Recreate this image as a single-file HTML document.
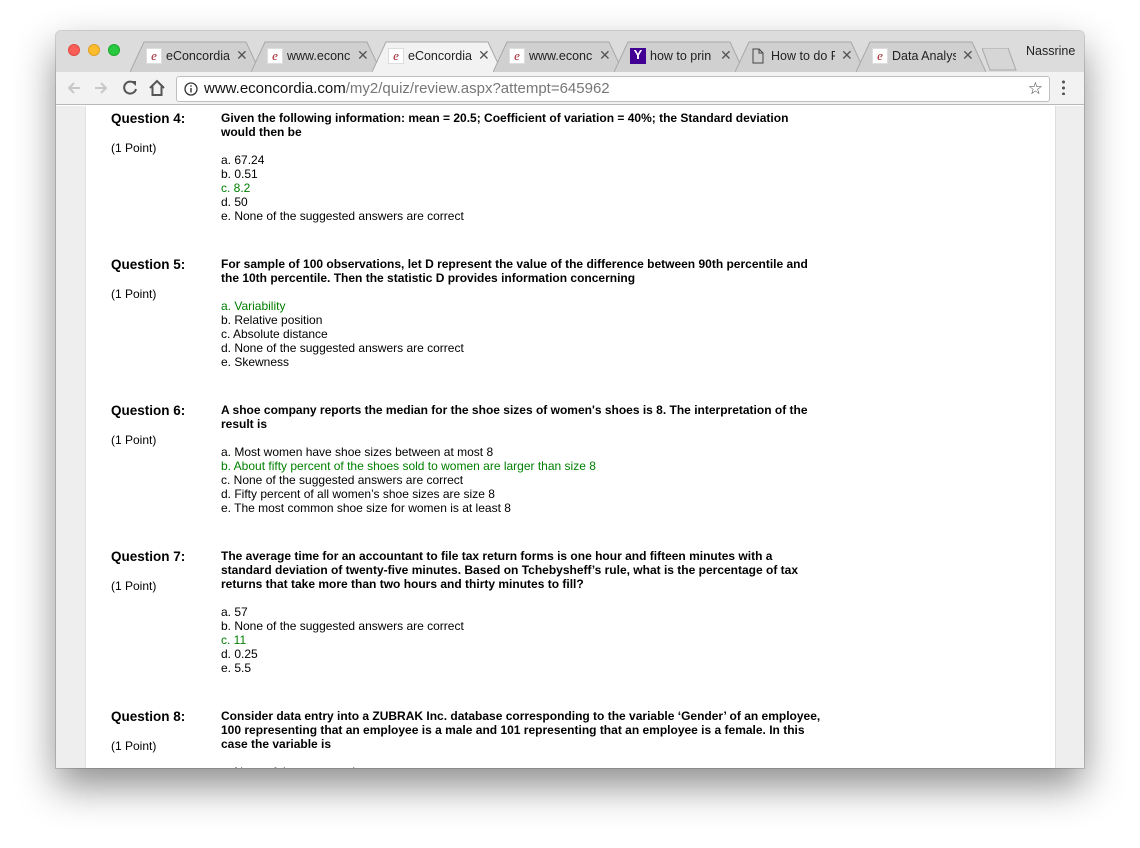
<!DOCTYPE html>
<html><head><style>
*{margin:0;padding:0;box-sizing:border-box}
body{width:1140px;height:848px;background:#fff;position:relative;overflow:hidden;font-family:"Liberation Sans",Arial,sans-serif}
.win{position:absolute;left:56px;top:31px;width:1028px;height:737px;border-radius:5px 5px 0 0;overflow:hidden;box-shadow:0 18px 40px rgba(0,0,0,.45),0 0 0 1px rgba(0,0,0,.15);background:#fff}
.tabbar{position:absolute;left:0;top:0;width:1028px;height:41px;background:#dcdcdc}
.toolbar{position:absolute;left:0;top:41px;width:1028px;height:33px;background:#f2f2f2;border-bottom:1px solid #b8b8b8}
.dot{position:absolute;top:13px;width:12px;height:12px;border-radius:50%}
.tab{position:absolute;top:10px;height:31px;font-size:12.5px;color:#222}
.tab svg{position:absolute;left:0;top:0}
.tab .t{position:absolute;top:8px;left:36px;white-space:nowrap;overflow:hidden}
.tab .x{position:absolute;top:6px;font-size:14px;color:#555}
.fav{position:absolute;left:16px;top:7px;width:16px;height:16px;background:#fff;border:1px solid #ddd;color:#a0202a;font-size:13px;line-height:13px;text-align:center;font-style:italic;font-family:"Liberation Serif",serif}
.url{position:absolute;left:120px;top:4px;width:874px;height:26px;background:#fff;border:1px solid #c0c0c0;border-radius:3px;font-size:15px;line-height:24px;padding-left:27px;color:#111}
.url span{color:#777}
.left{position:absolute;left:0;top:75px;width:30px;height:662px;background:#eeeeee;border-right:1px solid #e2e2e2}
.right{position:absolute;left:999px;top:75px;width:29px;height:662px;background:#eeeeee;border-left:1px solid #ddd}
.q{position:absolute;left:55px;font-size:12px;color:#000}
.q .h{position:absolute;left:0;top:0;font-weight:bold;font-size:13.5px;line-height:16px;white-space:nowrap}
.q .p{position:absolute;left:0;top:30px;font-size:12px;white-space:nowrap}
.q .b{position:absolute;left:110px;top:0;width:603px;font-weight:bold;line-height:14px}
.q .a{position:absolute;left:110px;line-height:14px;white-space:nowrap}
.g{color:#008000}
</style></head><body>
<div class="win">
 <div class="tabbar">
  <div class="dot" style="left:12px;background:#fc5f57;border:1px solid #de4a42"></div>
  <div class="dot" style="left:32px;background:#fdbc2e;border:1px solid #dea123"></div>
  <div class="dot" style="left:52px;background:#28c840;border:1px solid #1aab2a"></div>

  <div class="tab" style="left:74px;width:130px"><svg width="130" height="31"><path d="M0 31 L14 1 H116 L130 31" fill="#d0d0d0" stroke="#a8a8a8"/></svg><div class="fav">e</div><div class="t" style="width:66px">eConcordia</div><div class="x" style="left:106px">✕</div></div>
  <div class="tab" style="left:195px;width:130px"><svg width="130" height="31"><path d="M0 31 L14 1 H116 L130 31" fill="#d0d0d0" stroke="#a8a8a8"/></svg><div class="fav">e</div><div class="t" style="width:64px">www.econc</div><div class="x" style="left:106px">✕</div></div>
  <div class="tab" style="left:316px;width:130px"><svg width="130" height="31"><path d="M0 31 L14 1 H116 L130 31" fill="#f2f2f2" stroke="#a8a8a8"/></svg><div class="fav">e</div><div class="t" style="width:70px">eConcordia</div><div class="x" style="left:106px">✕</div></div>
  <div class="tab" style="left:437px;width:130px"><svg width="130" height="31"><path d="M0 31 L14 1 H116 L130 31" fill="#d0d0d0" stroke="#a8a8a8"/></svg><div class="fav">e</div><div class="t" style="width:64px">www.econc</div><div class="x" style="left:106px">✕</div></div>
  <div class="tab" style="left:558px;width:130px"><svg width="130" height="31"><path d="M0 31 L14 1 H116 L130 31" fill="#d0d0d0" stroke="#a8a8a8"/></svg><div class="fav" style="background:#410093;color:#fff;border:none;font-style:normal;font-family:'Liberation Sans';font-weight:bold">Y</div><div class="t" style="width:64px">how to prin</div><div class="x" style="left:106px">✕</div></div>
  <div class="tab" style="left:679px;width:130px"><svg width="130" height="31"><path d="M0 31 L14 1 H116 L130 31" fill="#d0d0d0" stroke="#a8a8a8"/><path d="M18 8 H24 L28 12 V22 H18 Z M24 8 V12 H28" fill="none" stroke="#444"/></svg><div class="t" style="width:64px">How to do F</div><div class="x" style="left:106px">✕</div></div>
  <div class="tab" style="left:800px;width:130px"><svg width="130" height="31"><path d="M0 31 L14 1 H116 L130 31" fill="#d0d0d0" stroke="#a8a8a8"/></svg><div class="fav">e</div><div class="t" style="width:64px">Data Analys</div><div class="x" style="left:106px">✕</div></div>
  <svg style="position:absolute;left:926px;top:17px" width="36" height="24"><path d="M0 0 H26 L34 22 H8 Z" fill="#d6d6d6" stroke="#a8a8a8"/></svg>
  <div style="position:absolute;left:970px;top:13px;font-size:12.5px;color:#222">Nassrine</div>
 </div>
 <div class="toolbar">
  <svg style="position:absolute;left:10px;top:8px" width="16" height="16"><path d="M14 8 H3 M8 3 L3 8 L8 13" fill="none" stroke="#c8c8c8" stroke-width="2"/></svg>
  <svg style="position:absolute;left:37px;top:8px" width="16" height="16"><path d="M2 8 H13 M8 3 L13 8 L8 13" fill="none" stroke="#c8c8c8" stroke-width="2"/></svg>
  <svg style="position:absolute;left:65px;top:7px" width="18" height="18"><path d="M14 5 A6 6 0 1 0 15 10" fill="none" stroke="#555" stroke-width="2"/><path d="M10 2 H15 V7 Z" fill="#555"/></svg>
  <svg style="position:absolute;left:92px;top:7px" width="18" height="18"><path d="M2 9 L9 2 L16 9 M4.5 7.5 V16 H13.5 V7.5" fill="none" stroke="#555" stroke-width="2"/></svg>
  <div class="url"><svg style="position:absolute;left:7px;top:5px" width="14" height="14"><circle cx="7" cy="7" r="6" fill="none" stroke="#333" stroke-width="1.3"/><rect x="6.3" y="6" width="1.4" height="4.5" fill="#333"/><rect x="6.3" y="3.3" width="1.4" height="1.4" fill="#333"/></svg>www.econcordia.com<span>/my2/quiz/review.aspx?attempt=645962</span><div style="position:absolute;right:6px;top:0;font-size:17px;color:#444">☆</div></div>
  <div style="position:absolute;left:1006px;top:7px;width:3px;height:16px;background:radial-gradient(circle,#555 1.4px,transparent 1.6px) 0 0/3px 6px"></div>
 </div>
 <div class="left"></div><div class="right"></div>

 <div class="q" style="top:80px"><div class="h">Question 4:</div><div class="p">(1 Point)</div>
  <div class="b">Given the following information: mean = 20.5; Coefficient of variation = 40%; the Standard deviation would then be</div>
  <div class="a" style="top:42px">a. 67.24<br>b. 0.51<br><span class="g">c. 8.2</span><br>d. 50<br>e. None of the suggested answers are correct</div></div>

 <div class="q" style="top:226px"><div class="h">Question 5:</div><div class="p">(1 Point)</div>
  <div class="b">For sample of 100 observations, let D represent the value of the difference between 90th percentile and the 10th percentile. Then the statistic D provides information concerning</div>
  <div class="a" style="top:42px"><span class="g">a. Variability</span><br>b. Relative position<br>c. Absolute distance<br>d. None of the suggested answers are correct<br>e. Skewness</div></div>

 <div class="q" style="top:372px"><div class="h">Question 6:</div><div class="p">(1 Point)</div>
  <div class="b">A shoe company reports the median for the shoe sizes of women's shoes is 8. The interpretation of the result is</div>
  <div class="a" style="top:42px">a. Most women have shoe sizes between at most 8<br><span class="g">b. About fifty percent of the shoes sold to women are larger than size 8</span><br>c. None of the suggested answers are correct<br>d. Fifty percent of all women’s shoe sizes are size 8<br>e. The most common shoe size for women is at least 8</div></div>

 <div class="q" style="top:518px"><div class="h">Question 7:</div><div class="p">(1 Point)</div>
  <div class="b">The average time for an accountant to file tax return forms is one hour and fifteen minutes with a standard deviation of twenty-five minutes. Based on Tchebysheff’s rule, what is the percentage of tax returns that take more than two hours and thirty minutes to fill?</div>
  <div class="a" style="top:56px">a. 57<br>b. None of the suggested answers are correct<br><span class="g">c. 11</span><br>d. 0.25<br>e. 5.5</div></div>

 <div class="q" style="top:678px"><div class="h">Question 8:</div><div class="p">(1 Point)</div>
  <div class="b">Consider data entry into a ZUBRAK Inc. database corresponding to the variable ‘Gender’ of an employee, 100 representing that an employee is a male and 101 representing that an employee is a female. In this case the variable is</div>
  <div class="a" style="top:56px">a. None of the suggested answers are correct</div></div>
</div>
</body></html>
